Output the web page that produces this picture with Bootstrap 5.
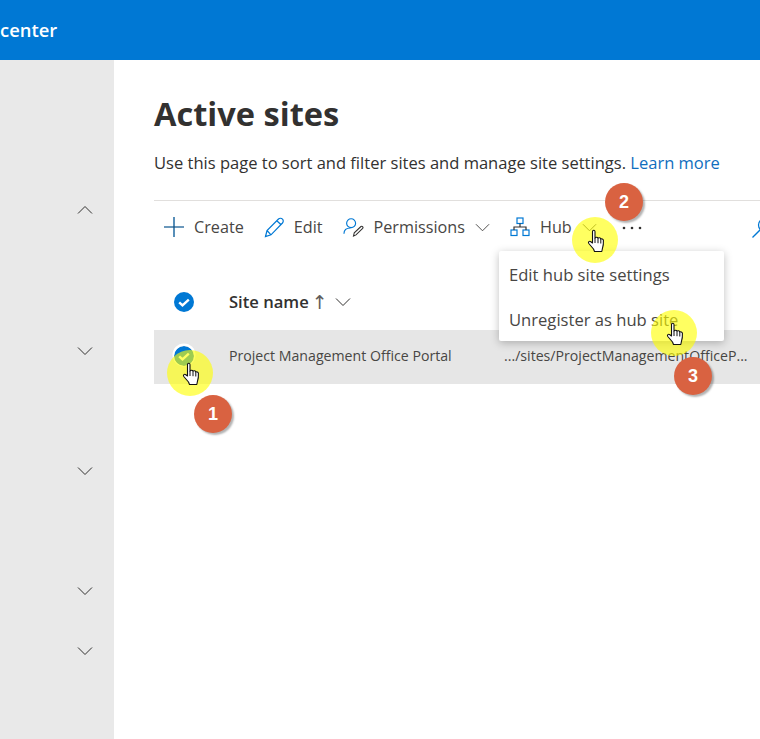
<!DOCTYPE html>
<html lang="en"><head><meta charset="utf-8"><title>Active sites</title>
<link href="https://cdn.jsdelivr.net/npm/bootstrap@5.3.0/dist/css/bootstrap.min.css" rel="stylesheet">
<style>
html,body{height:739px;overflow:hidden}
body{font-family:"Open Sans","Noto Sans","Liberation Sans",sans-serif;color:#323130;position:relative;background:#fff}
svg{display:block;flex:none}
.topbar{height:60px;background:#0078d4;color:#fff;font-size:18.4px;font-weight:600}
.shell{height:679px}
.sidenav{width:114px;background:#e9e9e9;padding-top:138px}
.navline{height:24px;padding-left:77px;color:#323130}
.g1{margin-top:117px}.g2{margin-top:96px}.g3{margin-top:36px}
.flipv{transform:scaleY(-1)}
.content{padding-left:40px;min-width:0;overflow:hidden}
.ptitle{font-size:32.6px;font-weight:700;line-height:40px;margin:34px 0 0;color:#323130}
.psub{font-size:16.54px;line-height:24px;margin:17px 0 0;white-space:nowrap}
.psub a{color:#106ebe;text-decoration:none}
.tools{height:54px;border-top:1px solid #e1dfdd;margin-top:25px;white-space:nowrap;font-size:16.2px;padding-left:10px}
.tool{color:#484644}
.tool-a{gap:10px;margin-right:20px}
.tool-b{gap:9px;margin-right:20px}
.tool-c{gap:10px;margin-right:20px}
.tool-hub{gap:10px;margin-right:25px}
.searchglyph{margin-right:-13px}
.headrow{height:76px;padding:20px 0 0 20px;font-size:16.6px;font-weight:600}
.siterow{height:54px;background:#e6e6e6;font-size:14.15px;color:#484644;padding:0 0 2px 20px;white-space:nowrap}
.cname{width:275px;margin-left:35px}
.headname{margin-left:35px}
.uparrow{font-size:19px;line-height:1;margin:0 7px 0 3px;font-weight:400;color:#605e5c;font-family:"DejaVu Sans",sans-serif}
.ringed{border-radius:50%;box-shadow:0 -1px 0 1.500px #fff}
.hubmenu{left:499px;top:251px;width:225px;height:90px;background:#fff;border:0;border-radius:2px;box-shadow:0 2px 9px rgba(0,0,0,.25);padding:2px 0 0;margin:0;display:block;font-size:16.6px;z-index:2}
.hubmenu .dropdown-item{height:45px;padding:0 10px;color:#484644;display:flex;align-items:center}
.glow{width:46px;height:46px;border-radius:50%;background:rgba(255,255,0,.62);z-index:3}
.pointer{z-index:4}
.num{width:38px;height:38px;border-radius:50%;background:#d96241;color:#fff;font-family:"Liberation Sans",sans-serif;font-weight:700;font-size:18px;box-shadow:2px 2px 2px rgba(0,0,0,.3);z-index:5}
.g-a{left:167px;top:350px}.g-b{left:572px;top:217px}.g-c{left:651px;top:310px}
.p-a{left:182px;top:362px}.p-b{left:587px;top:229px}.p-c{left:666px;top:322px}
.n-a{left:194px;top:395px}.n-b{left:605px;top:183px}.n-c{left:674px;top:357px}
</style></head><body>
<svg width="0" height="0" class="position-absolute"><defs>
<symbol id="chev" viewBox="0 0 16 16"><path d="M1 4.500 8 11.500 15 4.500" fill="none" stroke="currentColor" stroke-width="1"/></symbol>
<symbol id="chk" viewBox="0 0 20 20"><circle cx="10" cy="10" r="10" fill="#0078d4"/><path d="M5.200 10.300 8.500 13.300 14.800 7.600" fill="none" stroke="#fff" stroke-width="2.400"/></symbol>
<symbol id="hand" viewBox="0 0 18 24"><path d="M6 1.500c1-.7 2 0 2 1.200V9c.5-1 2.600-1 3 .2.7-.8 2.500-.6 2.800.7.9-.5 2.500 0 2.600 1.400.1 2.500 0 5.500-.8 7.400l-.8 3.800H7.500L6.500 20 1.800 14.500c-1-1.300.5-3 2-1.800L5.500 14V2.700c0-.5.200-1 .5-1.200z" fill="#fff" stroke="#111" stroke-width="1.100" stroke-linejoin="round"/><path d="M8 9v5M11 9.200v5M13.800 10v4.500" stroke="#111" stroke-width="1" fill="none"/></symbol>
</defs></svg>

<header class="topbar d-flex align-items-center"><span>center</span></header>
<div class="shell d-flex">
  <nav class="sidenav flex-shrink-0">
    <div class="navline d-flex align-items-center"><svg width="16" height="16" class="flipv"><use href="#chev"/></svg></div>
    <div class="navline g1 d-flex align-items-center"><svg width="16" height="16"><use href="#chev"/></svg></div>
    <div class="navline g2 d-flex align-items-center"><svg width="16" height="16"><use href="#chev"/></svg></div>
    <div class="navline g2 d-flex align-items-center"><svg width="16" height="16"><use href="#chev"/></svg></div>
    <div class="navline g3 d-flex align-items-center"><svg width="16" height="16"><use href="#chev"/></svg></div>
  </nav>
  <main class="content flex-grow-1">
    <h1 class="ptitle">Active sites</h1>
    <p class="psub">Use this page to sort and filter sites and manage site settings. <a href="#">Learn more</a></p>
    <div class="tools d-flex align-items-center">
      <div class="tool tool-a d-flex align-items-center"><svg width="20" height="20" viewBox="0 0 20 20"><path d="M10 0v20M0 10h20" stroke="#0078d4" stroke-width="1.200"/><path d="M10 0v20M0 10h20" stroke="#323130" stroke-width=".5"/></svg><span>Create</span></div>
      <div class="tool tool-b d-flex align-items-center"><svg width="21" height="21" viewBox="0 0 21 21"><path d="M1.500 19.500 3 13.500 14.500 2c1-1 3-1 4 .2 1 1 1 2.800 0 3.800L7 17.800zM3 13.500 7 17.800M12.800 3.700l4.600 4.300" fill="none" stroke="#0078d4" stroke-width="1.200"/></svg><span>Edit</span></div>
      <div class="tool tool-c d-flex align-items-center"><svg width="21" height="21" viewBox="0 0 22 21"><circle cx="8.500" cy="6" r="4.700" fill="none" stroke="#0078d4" stroke-width="1.200"/><path d="M1 17c0-4 3-6 7-6" fill="none" stroke="#0078d4" stroke-width="1.200"/><path d="M11 19.500l.8-3.500 7-6.500c1.500-.8 2.800.8 1.800 2l-7 6.700z" fill="none" stroke="#323130" stroke-width="1.100"/></svg><span>Permissions</span><svg width="15" height="15"><use href="#chev"/></svg></div>
      <div class="tool tool-hub d-flex align-items-center"><svg width="20" height="20" viewBox="0 0 20 20" fill="none" stroke="#0078d4" stroke-width="1.200"><rect x="7" y="1" width="6" height="5.500"/><rect x="1" y="13" width="6" height="5.500"/><rect x="13" y="13" width="6" height="5.500"/><path d="M10 6.500V10M4 13v-3h12v3" stroke="#323130"/></svg><span>Hub</span><svg width="15" height="15"><use href="#chev"/></svg></div>
      <svg width="20" height="6" viewBox="0 0 20 6" fill="#323130"><circle cx="2" cy="3" r="1.300"/><circle cx="10" cy="3" r="1.300"/><circle cx="18" cy="3" r="1.300"/></svg>
      <svg width="22" height="22" viewBox="0 0 22 22" class="ms-auto searchglyph" fill="none" stroke="#0078d4" stroke-width="1.300"><circle cx="14" cy="8" r="6.500"/><path d="M9.500 12.500 1.500 20.500"/></svg>
    </div>
    <div class="headrow d-flex align-items-center">
      <svg width="20" height="20"><use href="#chk"/></svg>
      <span class="headname">Site name</span>
      <span class="uparrow">↑</span>
      <svg width="16" height="16"><use href="#chev"/></svg>
    </div>
    <div class="siterow d-flex align-items-center">
      <svg width="20" height="20" class="ringed"><use href="#chk"/></svg>
      <span class="cname">Project Management Office Portal</span>
      <span>.../sites/ProjectManagementOfficeP...</span>
    </div>
  </main>
</div>

<ul class="dropdown-menu hubmenu position-absolute list-unstyled">
  <li><a class="dropdown-item" href="#">Edit hub site settings</a></li>
  <li><a class="dropdown-item" href="#">Unregister as hub site</a></li>
</ul>

<div class="glow position-absolute g-a"></div><div class="glow position-absolute g-b"></div><div class="glow position-absolute g-c"></div>
<svg width="18" height="24" class="pointer position-absolute p-a"><use href="#hand"/></svg>
<svg width="18" height="24" class="pointer position-absolute p-b"><use href="#hand"/></svg>
<svg width="18" height="24" class="pointer position-absolute p-c"><use href="#hand"/></svg>
<div class="num position-absolute n-a d-flex align-items-center justify-content-center">1</div>
<div class="num position-absolute n-b d-flex align-items-center justify-content-center">2</div>
<div class="num position-absolute n-c d-flex align-items-center justify-content-center">3</div>
<script src="https://cdn.jsdelivr.net/npm/bootstrap@5.3.0/dist/js/bootstrap.bundle.min.js"></script>
</body></html>
